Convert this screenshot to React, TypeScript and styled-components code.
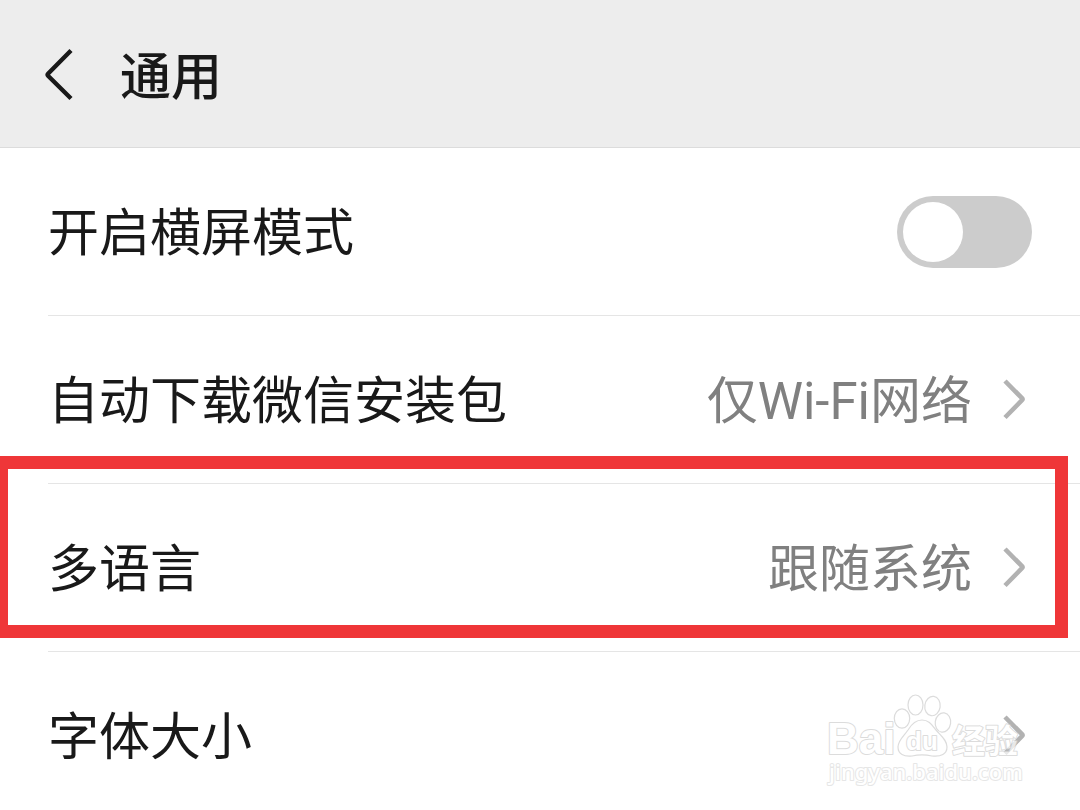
import React from "react";
import styled, { createGlobalStyle } from "styled-components";

const GlobalStyle = createGlobalStyle`
  *, *::before, *::after { box-sizing: border-box; }
  body {
    margin: 0;
    background: #fff;
    color: #191919;
    font-family: Roboto, "Noto Sans CJK SC", sans-serif;
    overflow-x: hidden;
  }
`;

const Page = styled.div`
  position: relative;
  min-height: 100vh;
  overflow: hidden;
`;

const Header = styled.header`
  display: flex;
  align-items: center;
  gap: 44px;
  height: 148px;
  padding: 2px 40px 0;
  background: #ededed;
  border-bottom: 1px solid #dcdcdc;
`;

const BackButton = styled.button`
  display: flex;
  padding: 0;
  border: 0;
  background: none;
  color: inherit;
  cursor: pointer;
`;

const Title = styled.h1`
  margin: 0;
  padding-top: 6px;
  font-size: 51px;
  line-height: 72px;
  font-weight: 500;
`;

const List = styled.ul`
  margin: 0;
  padding: 0;
  list-style: none;
`;

const Item = styled.li`
  position: relative;
  padding-left: 48px;
`;

const rowLayout = `
  display: flex;
  align-items: center;
  justify-content: space-between;
  width: 100%;
  height: 168px;
  padding: 0 48px 0 0;
  font-size: 51px;
  line-height: 72px;
`;

const SwitchRow = styled.label`
  ${rowLayout}
  border-bottom: 1px solid #e5e5e5;
`;

const LinkRow = styled.button`
  ${rowLayout}
  border: 0;
  border-bottom: 1px solid #e5e5e5;
  background: none;
  color: inherit;
  font-family: inherit;
  text-align: left;
  cursor: pointer;
`;

const Label = styled.span`
  flex: 1;
  padding-top: 5px;
`;

const Value = styled.span`
  padding-top: 5px;
  margin-right: 28px;
  color: #808080;
`;

const Switch = styled.input`
  appearance: none;
  width: 135px;
  height: 72px;
  margin: 0;
  padding: 6px;
  border-radius: 36px;
  background: #ccc;
  cursor: pointer;

  &::before {
    content: "";
    display: block;
    width: 60px;
    height: 60px;
    border-radius: 50%;
    background: #fff;
  }
  &:checked { background: #07c160; }
  &:checked::before { margin-left: auto; }
`;

const Highlight = styled.div`
  position: absolute;
  inset: -28px 12px 14px -5px;
  border: 13px solid #ef3638;
  pointer-events: none;
`;

const Watermark = styled.svg`
  position: absolute;
  right: 52px;
  top: 688px;
  opacity: 0.7;
  pointer-events: none;
`;

const OutlinedText = styled.text`
  paint-order: stroke;
  stroke-width: 2px;
`;

const BackIcon = () => (
  <svg width="36" height="56" viewBox="0 0 36 56" fill="none" stroke="currentColor" strokeWidth="4.400" aria-hidden="true">
    <path d="M31 3.500 8 26.700Q7 27.700 8 28.700L31 51.500" />
  </svg>
);

const Chevron = () => (
  <svg width="32" height="44" viewBox="0 0 32 44" fill="none" stroke="#b2b2b2" strokeWidth="4.600" aria-hidden="true">
    <path d="M5 3 22 20.200Q23 21.200 22 22.200L5 39.500" />
  </svg>
);

const BaiduMark = () => (
  <Watermark
    width="204"
    height="104"
    viewBox="0 0 204 104"
    fill="#fff"
    stroke="#cecece"
    strokeWidth="1.2"
    strokeLinejoin="round"
    role="img"
    aria-label="Baidu 经验"
  >
    <OutlinedText x="3" y="66" fontFamily="Liberation Sans" fontWeight="700" fontSize="44">Bai</OutlinedText>
    <ellipse cx="78" cy="30.500" rx="7.700" ry="9.700" />
    <ellipse cx="91.500" cy="17" rx="7.500" ry="10" />
    <ellipse cx="108.500" cy="18" rx="7.700" ry="9.700" transform="rotate(8 108 18)" />
    <ellipse cx="119" cy="34.500" rx="7.700" ry="9.700" transform="rotate(8 119 34)" />
    <path d="M98 32C91 32 87 37 84 42C80 48 74 52 74 59C74 66 80 69 88 68C95 66.500 101 66.500 108 68C117 69 123 66 123 59C123 52 117 48 112 42C108 37 105 32 98 32Z" />
    <OutlinedText x="82" y="62" fontFamily="Liberation Sans" fontWeight="700" fontSize="26">du</OutlinedText>
    <OutlinedText x="128" y="65" fontFamily="Noto Sans CJK SC" fontWeight="700" fontSize="33">经验</OutlinedText>
    <OutlinedText x="5" y="92" fontFamily="Noto Sans" fontWeight="500" fontSize="22" stroke="#dcdcdc">jingyan.baidu.com</OutlinedText>
  </Watermark>
);

type Setting = { label: string; value?: string; highlighted?: boolean };

const settings: Setting[] = [
  { label: "自动下载微信安装包", value: "仅Wi-Fi网络" },
  { label: "多语言", value: "跟随系统", highlighted: true },
  { label: "字体大小" },
];

export default function App() {
  return (
    <Page>
      <GlobalStyle />
      <Header>
        <BackButton type="button" aria-label="返回">
          <BackIcon />
        </BackButton>
        <Title>通用</Title>
      </Header>
      <main>
        <List>
          <Item>
            <SwitchRow>
              <Label>开启横屏模式</Label>
              <Switch type="checkbox" role="switch" />
            </SwitchRow>
          </Item>
          {settings.map((s) => (
            <Item key={s.label}>
              <LinkRow type="button">
                <Label>{s.label}</Label>
                {s.value && <Value>{s.value}</Value>}
                <Chevron />
              </LinkRow>
              {s.highlighted && <Highlight />}
            </Item>
          ))}
        </List>
      </main>
      <BaiduMark />
    </Page>
  );
}
